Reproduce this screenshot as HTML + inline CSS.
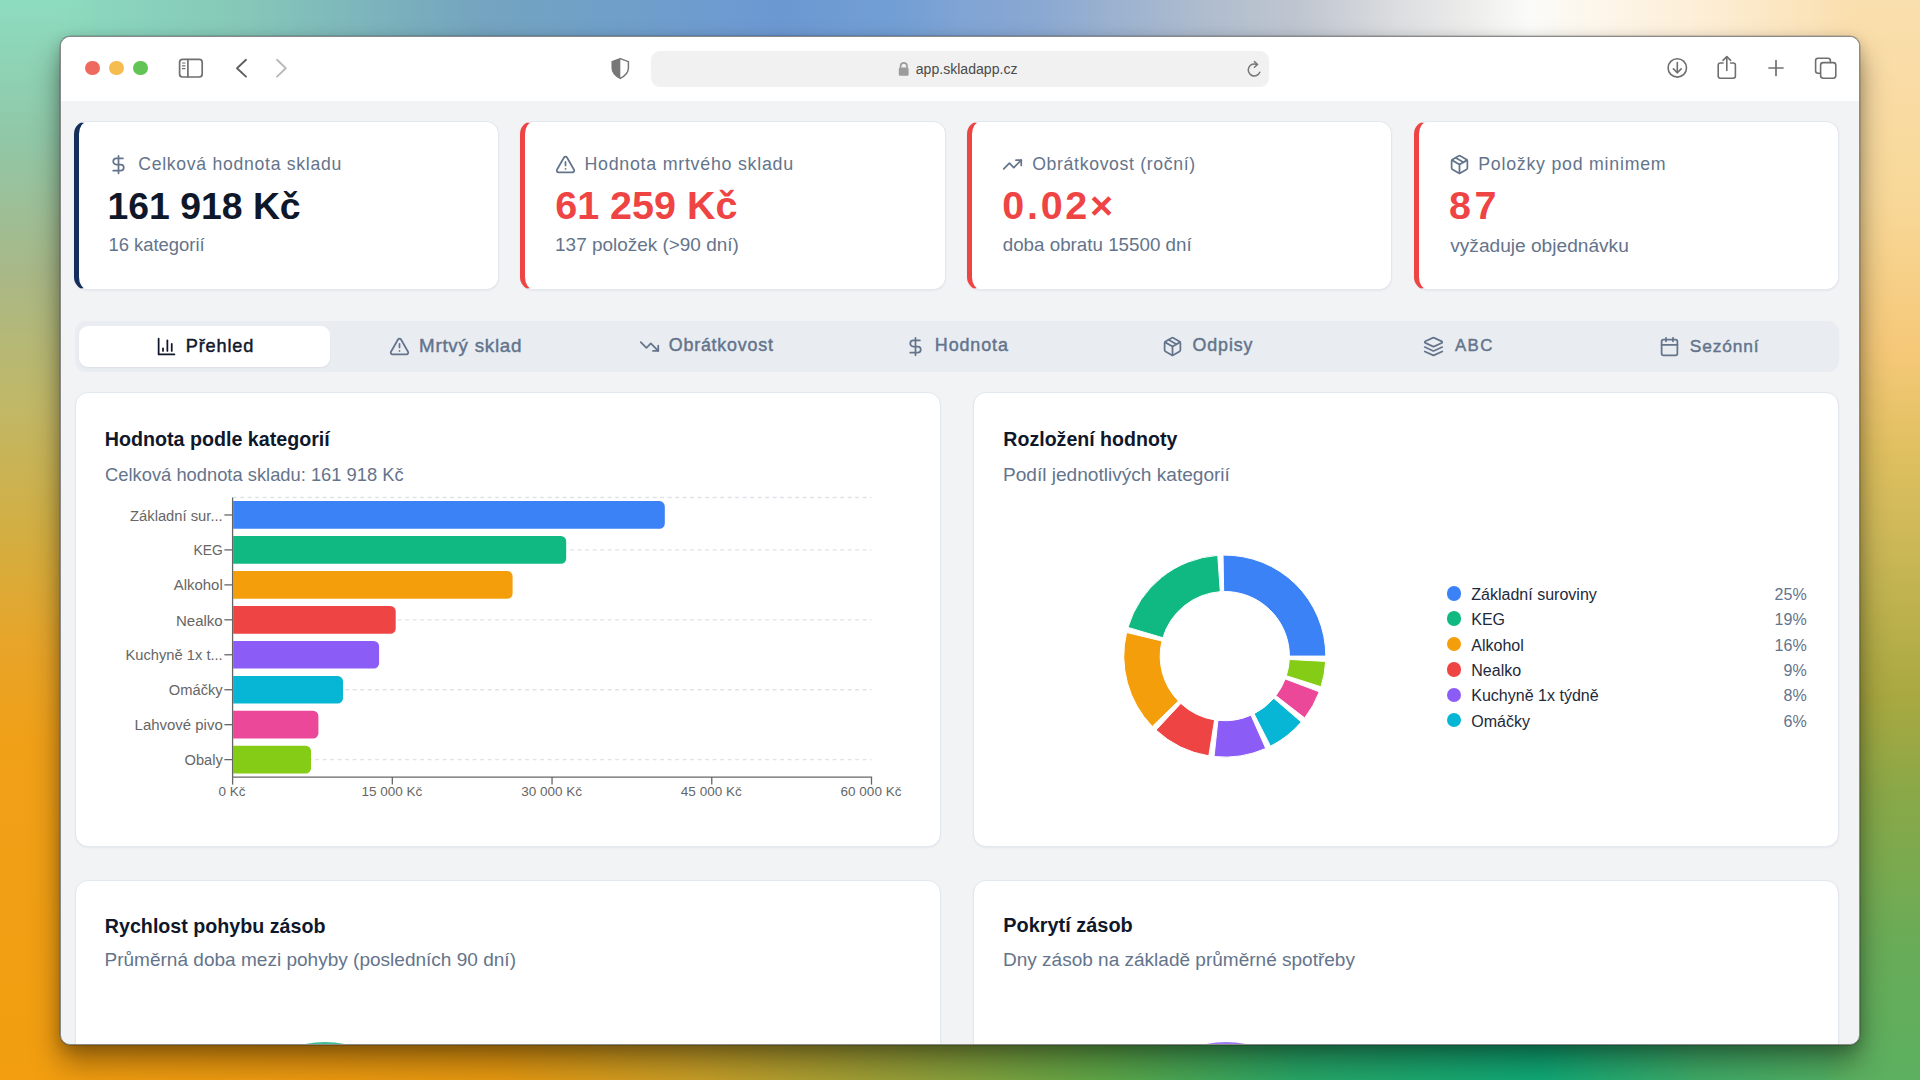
<!DOCTYPE html>
<html><head><meta charset="utf-8">
<style>
html,body{margin:0;padding:0;}
body{width:1920px;height:1080px;overflow:hidden;position:relative;font-family:"Liberation Sans",sans-serif;background:#f2a010;}
.abs{position:absolute;}
.bgs{position:absolute;}
#win{position:absolute;left:60px;top:36px;width:1798px;height:1007px;border:1px solid #8a8a8a;border-radius:10px;overflow:hidden;background:#f2f3f5;
 box-shadow:0 0 0 0.5px rgba(0,0,0,.25), 0 18px 30px rgba(0,0,0,.38), 0 4px 14px rgba(0,0,0,.18);}
#pg{position:absolute;left:-61px;top:-37px;width:1920px;height:1080px;}
.t{position:absolute;white-space:nowrap;line-height:1;}
.card{position:absolute;background:#fff;border:1.3px solid #e3e7ee;border-radius:13px;box-sizing:border-box;box-shadow:0 1px 2px rgba(15,23,42,.05);}
.kpi{border-left:5px solid #ef4444;}
.lbl{color:#64748b;}
svg{position:absolute;overflow:visible;}
</style></head>
<body>
<!-- background strips -->
<div class="bgs" style="left:0;top:0;width:1920px;height:70px;background:linear-gradient(90deg,#8ddfc0 0px,#86c8b8 240px,#74a4bf 480px,#70a0c8 600px,#6e9bd0 720px,#6c98d2 780px,#729fd4 900px,#80a4d4 960px,#8aa8d2 1040px,#98b0d0 1100px,#aebcce 1200px,#c0c6d0 1300px,#dcdee0 1400px,#e8e8e8 1450px,#fbfbf8 1530px,#fdf6ea 1600px,#fdeed6 1700px,#fbe4bc 1800px,#fadaa6 1920px);"></div>
<div class="bgs" style="left:0;top:1010px;width:1920px;height:70px;background:linear-gradient(90deg,#f5a010 0px,#f09c10 300px,#e89a10 500px,#c8a028 700px,#98a038 900px,#60a848 1100px,#28a868 1300px,#10ab78 1540px,#40ad68 1700px,#5eb35f 1920px);"></div>
<div class="bgs" style="left:0;top:0;width:100px;height:1080px;-webkit-mask-image:linear-gradient(90deg,#000 62px,transparent 100px);background:linear-gradient(180deg,#8ddcc0 0px,#90c8a8 135px,#a8b888 270px,#c0b868 400px,#d4ae40 540px,#e8a428 650px,#f0a018 740px,#f29e10 1080px);"></div>
<div class="bgs" style="left:1820px;top:0;width:100px;height:1080px;-webkit-mask-image:linear-gradient(270deg,#000 62px,transparent 100px);background:linear-gradient(180deg,#fadfae 0px,#f8d898 200px,#f5c878 350px,#e0c060 450px,#cdb858 540px,#a8a840 700px,#88a848 800px,#68ac58 950px,#5cb060 1080px);"></div>

<div id="win"><div id="pg">
<div class="abs" style="left:0;top:0;width:1920px;height:101px;background:#fff;"></div>
<div class="abs" style="left:85.10px;top:60.60px;width:14.8px;height:14.8px;border-radius:50%;background:#ee6a5f;"></div>
<div class="abs" style="left:109.20px;top:60.60px;width:14.8px;height:14.8px;border-radius:50%;background:#f5bd4f;"></div>
<div class="abs" style="left:133.40px;top:60.60px;width:14.8px;height:14.8px;border-radius:50%;background:#61c454;"></div>
<svg style="left:0;top:0" width="1920" height="101" fill="none" stroke="#6f6f6f" stroke-width="1.7" stroke-linecap="round" stroke-linejoin="round">
<rect x="179.6" y="59.4" width="22.6" height="17.6" rx="3"/>
<line x1="187.9" y1="59.6" x2="187.9" y2="76.8"/>
<line x1="182.4" y1="63" x2="185" y2="63" stroke-width="1.2"/><line x1="182.4" y1="65.8" x2="185" y2="65.8" stroke-width="1.2"/><line x1="182.4" y1="68.6" x2="185" y2="68.6" stroke-width="1.2"/>
<polyline points="246,59.8 237,68.2 246,76.6" stroke="#5f5f5f" stroke-width="1.9"/>
<polyline points="277,59.8 285.8,68.2 277,76.6" stroke="#b9b9b9" stroke-width="1.9"/>
<path d="M620.3 58.6 L628.4 61.6 V68 C628.4 73 625.2 75.8 620.3 78.4 C615.4 75.8 612.2 73 612.2 68 V61.6 Z" stroke="#777" stroke-width="1.5"/>
<path d="M620.3 58.6 L612.2 61.6 V68 C612.2 73 615.4 75.8 620.3 78.4 Z" fill="#777" stroke="none"/>
<circle cx="1677.3" cy="67.9" r="9.2" stroke-width="1.6"/>
<line x1="1677.3" y1="62.6" x2="1677.3" y2="72.6" stroke-width="1.6"/>
<polyline points="1673.4,68.9 1677.3,72.8 1681.2,68.9" stroke-width="1.6"/>
<path d="M1723 63 H1720.4 A2.2 2.2 0 0 0 1718.2 65.2 V76 A2.2 2.2 0 0 0 1720.4 78.2 H1733.2 A2.2 2.2 0 0 0 1735.4 76 V65.2 A2.2 2.2 0 0 0 1733.2 63 H1730.6" stroke-width="1.6"/>
<line x1="1726.8" y1="56.8" x2="1726.8" y2="70.4" stroke-width="1.6"/>
<polyline points="1723,60.4 1726.8,56.6 1730.6,60.4" stroke-width="1.6"/>
<line x1="1776" y1="60.5" x2="1776" y2="75.5" stroke-width="1.7"/><line x1="1769" y1="68" x2="1783" y2="68" stroke-width="1.7"/>
<path d="M1820.4 73.2 H1818 A2.4 2.4 0 0 1 1815.6 70.8 V60.6 A2.4 2.4 0 0 1 1818 58.2 H1828 A2.4 2.4 0 0 1 1830.4 60.6 V62.4" stroke-width="1.6"/>
<rect x="1820.6" y="62.6" width="15.2" height="15.6" rx="2.6" stroke-width="1.6"/>
</svg>
<div class="abs" style="left:651px;top:51px;width:618px;height:35.5px;border-radius:9px;background:#f1f1f1;"></div>
<svg style="left:0;top:0" width="1920" height="101">
<path d="M900.6 67.8 V65.4 A3.3 3.3 0 0 1 907 65.4 V67.8" fill="none" stroke="#9c9c9c" stroke-width="1.7"/>
<rect x="898.8" y="67.6" width="9.8" height="8.2" rx="1.4" fill="#9c9c9c"/>
<path d="M1259.8 72.3 A6 6 0 1 1 1256.8 64.5" fill="none" stroke="#777" stroke-width="1.5" stroke-linecap="round"/>
<polyline points="1254.4,61.6 1257.6,64.5 1254.4,67.3" fill="none" stroke="#777" stroke-width="1.5" stroke-linecap="round" stroke-linejoin="round"/>
</svg>
<div class="t" style="left:915.74px;top:61.93px;font-size:14.08px;color:#4a4a4a;font-weight:400;letter-spacing:0.00px;">app.skladapp.cz</div>
<div class="card" style="left:73.5px;top:120.6px;width:425.2px;height:169.4px;border-left:5px solid #14305a;"></div>
<svg style="left:108.20px;top:154.00px" width="21" height="21" viewBox="0 0 24 24" fill="none" stroke="#64748b" stroke-width="2" stroke-linecap="round" stroke-linejoin="round"><line x1="12" x2="12" y1="2" y2="22"/><path d="M17 5H9.5a3.5 3.5 0 0 0 0 7h5a3.5 3.5 0 0 1 0 7H6"/></svg>
<div class="t" style="left:138.22px;top:155.91px;font-size:17.63px;color:#64748b;font-weight:400;letter-spacing:0.72px;">Celková hodnota skladu</div>
<div class="t" style="left:107.46px;top:187.64px;font-size:37.37px;color:#0f172a;font-weight:700;letter-spacing:0.00px;">161 918 Kč</div>
<div class="t" style="left:108.41px;top:236.14px;font-size:18.42px;color:#64748b;font-weight:400;letter-spacing:0.00px;">16 kategorií</div>
<div class="card" style="left:520.2px;top:120.6px;width:426.0px;height:169.4px;border-left:5px solid #ef4444;"></div>
<svg style="left:554.90px;top:154.00px" width="21" height="21" viewBox="0 0 24 24" fill="none" stroke="#64748b" stroke-width="2" stroke-linecap="round" stroke-linejoin="round"><path d="m21.73 18-8-14a2 2 0 0 0-3.48 0l-8 14A2 2 0 0 0 4 21h16a2 2 0 0 0 1.73-3"/><path d="M12 9v4"/><path d="M12 17h.01"/></svg>
<div class="t" style="left:584.38px;top:155.73px;font-size:17.84px;color:#64748b;font-weight:400;letter-spacing:0.74px;">Hodnota mrtvého skladu</div>
<div class="t" style="left:555.22px;top:185.83px;font-size:39.49px;color:#ef4444;font-weight:700;letter-spacing:0.00px;">61 259 Kč</div>
<div class="t" style="left:555.07px;top:235.69px;font-size:18.95px;color:#64748b;font-weight:400;letter-spacing:0.00px;">137 položek (&gt;90 dní)</div>
<div class="card" style="left:967.3px;top:120.6px;width:424.8px;height:169.4px;border-left:5px solid #ef4444;"></div>
<svg style="left:1002.00px;top:154.00px" width="21" height="21" viewBox="0 0 24 24" fill="none" stroke="#64748b" stroke-width="2" stroke-linecap="round" stroke-linejoin="round"><polyline points="22 7 13.5 15.5 8.5 10.5 2 17"/><polyline points="16 7 22 7 22 13"/></svg>
<div class="t" style="left:1032.20px;top:155.90px;font-size:17.65px;color:#64748b;font-weight:400;letter-spacing:0.67px;">Obrátkovost (roční)</div>
<div class="t" style="left:1002.30px;top:185.83px;font-size:39.50px;color:#ef4444;font-weight:700;letter-spacing:2.70px;">0.02×</div>
<div class="t" style="left:1002.75px;top:235.84px;font-size:18.78px;color:#64748b;font-weight:400;letter-spacing:0.00px;">doba obratu 15500 dní</div>
<div class="card" style="left:1414.0px;top:120.6px;width:425.0px;height:169.4px;border-left:5px solid #ef4444;"></div>
<svg style="left:1448.70px;top:154.00px" width="21" height="21" viewBox="0 0 24 24" fill="none" stroke="#64748b" stroke-width="2" stroke-linecap="round" stroke-linejoin="round"><path d="m7.5 4.27 9 5.15"/><path d="M21 8a2 2 0 0 0-1-1.73l-7-4a2 2 0 0 0-2 0l-7 4A2 2 0 0 0 3 8v8a2 2 0 0 0 1 1.73l7 4a2 2 0 0 0 2 0l7-4A2 2 0 0 0 21 16Z"/><path d="m3.3 7 8.7 5 8.7-5"/><path d="M12 22V12"/></svg>
<div class="t" style="left:1478.18px;top:155.81px;font-size:17.75px;color:#64748b;font-weight:400;letter-spacing:0.77px;">Položky pod minimem</div>
<div class="t" style="left:1449.00px;top:185.83px;font-size:39.50px;color:#ef4444;font-weight:700;letter-spacing:3.60px;">87</div>
<div class="t" style="left:1450.20px;top:235.53px;font-size:19.14px;color:#64748b;font-weight:400;letter-spacing:0.00px;">vyžaduje objednávku</div>
<div class="abs" style="left:74.7px;top:321.2px;width:1764.6px;height:50.4px;border-radius:11px;background:#e9edf2;"></div>
<div class="abs" style="left:79px;top:326.2px;width:250.8px;height:41px;border-radius:9px;background:#fff;box-shadow:0 1px 2px rgba(15,23,42,.06);"></div>
<svg style="left:155.50px;top:336.20px" width="21" height="21" viewBox="0 0 24 24" fill="none" stroke="#0f172a" stroke-width="2" stroke-linecap="round" stroke-linejoin="round"><path d="M3 3v18h18"/><path d="M18 17V9"/><path d="M13 17V5"/><path d="M8 17v-3"/></svg>
<div class="t" style="left:185.80px;top:337.07px;font-size:18.16px;color:#0f172a;font-weight:400;letter-spacing:0.81px;-webkit-text-stroke:0.45px #0f172a;">Přehled</div>
<svg style="left:389.25px;top:336.20px" width="21" height="21" viewBox="0 0 24 24" fill="none" stroke="#64748b" stroke-width="2" stroke-linecap="round" stroke-linejoin="round"><path d="m21.73 18-8-14a2 2 0 0 0-3.48 0l-8 14A2 2 0 0 0 4 21h16a2 2 0 0 0 1.73-3"/><path d="M12 9v4"/><path d="M12 17h.01"/></svg>
<div class="t" style="left:418.99px;top:336.52px;font-size:18.81px;color:#64748b;font-weight:400;letter-spacing:0.75px;-webkit-text-stroke:0.45px #64748b;">Mrtvý sklad</div>
<svg style="left:638.80px;top:336.20px" width="21" height="21" viewBox="0 0 24 24" fill="none" stroke="#64748b" stroke-width="2" stroke-linecap="round" stroke-linejoin="round"><polyline points="22 17 13.5 8.5 8.5 13.5 2 7"/><polyline points="16 17 22 17 22 11"/></svg>
<div class="t" style="left:668.79px;top:337.30px;font-size:17.88px;color:#64748b;font-weight:400;letter-spacing:0.78px;-webkit-text-stroke:0.45px #64748b;">Obrátkovost</div>
<svg style="left:904.90px;top:336.20px" width="21" height="21" viewBox="0 0 24 24" fill="none" stroke="#64748b" stroke-width="2" stroke-linecap="round" stroke-linejoin="round"><line x1="12" x2="12" y1="2" y2="22"/><path d="M17 5H9.5a3.5 3.5 0 0 0 0 7h5a3.5 3.5 0 0 1 0 7H6"/></svg>
<div class="t" style="left:934.82px;top:337.27px;font-size:17.92px;color:#64748b;font-weight:400;letter-spacing:0.90px;-webkit-text-stroke:0.45px #64748b;">Hodnota</div>
<svg style="left:1161.75px;top:336.20px" width="21" height="21" viewBox="0 0 24 24" fill="none" stroke="#64748b" stroke-width="2" stroke-linecap="round" stroke-linejoin="round"><path d="m7.5 4.27 9 5.15"/><path d="M21 8a2 2 0 0 0-1-1.73l-7-4a2 2 0 0 0-2 0l-7 4A2 2 0 0 0 3 8v8a2 2 0 0 0 1 1.73l7 4a2 2 0 0 0 2 0l7-4A2 2 0 0 0 21 16Z"/><path d="m3.3 7 8.7 5 8.7-5"/><path d="M12 22V12"/></svg>
<div class="t" style="left:1192.54px;top:337.33px;font-size:17.84px;color:#64748b;font-weight:400;letter-spacing:0.89px;-webkit-text-stroke:0.45px #64748b;">Odpisy</div>
<svg style="left:1423.45px;top:336.20px" width="21" height="21" viewBox="0 0 24 24" fill="none" stroke="#64748b" stroke-width="2" stroke-linecap="round" stroke-linejoin="round"><path d="m12.83 2.18a2 2 0 0 0-1.66 0L2.6 6.08a1 1 0 0 0 0 1.83l8.58 3.91a2 2 0 0 0 1.66 0l8.58-3.9a1 1 0 0 0 0-1.83Z"/><path d="m22 17.65-9.17 4.16a2 2 0 0 1-1.66 0L2 17.65"/><path d="m22 12.65-9.17 4.16a2 2 0 0 1-1.66 0L2 12.65"/></svg>
<div class="t" style="left:1455.00px;top:338.25px;font-size:16.77px;color:#64748b;font-weight:400;letter-spacing:1.38px;-webkit-text-stroke:0.45px #64748b;">ABC</div>
<svg style="left:1659.10px;top:336.20px" width="21" height="21" viewBox="0 0 24 24" fill="none" stroke="#64748b" stroke-width="2" stroke-linecap="round" stroke-linejoin="round"><path d="M8 2v4"/><path d="M16 2v4"/><rect width="18" height="18" x="3" y="4" rx="2"/><path d="M3 10h18"/></svg>
<div class="t" style="left:1689.81px;top:337.73px;font-size:17.37px;color:#64748b;font-weight:400;letter-spacing:0.85px;-webkit-text-stroke:0.45px #64748b;">Sezónní</div>
<div class="card" style="left:74.7px;top:392.2px;width:866.5px;height:455.3px;"></div>
<div class="card" style="left:972.5px;top:392.2px;width:866.8px;height:455.3px;"></div>
<div class="card" style="left:74.7px;top:879.6px;width:866.5px;height:400px;"></div>
<div class="card" style="left:972.5px;top:879.6px;width:866.8px;height:400px;"></div>
<div class="t" style="left:104.82px;top:429.89px;font-size:19.66px;color:#0f172a;font-weight:700;letter-spacing:0.00px;">Hodnota podle kategorií</div>
<div class="t" style="left:105.08px;top:465.61px;font-size:18.34px;color:#64748b;font-weight:400;letter-spacing:0.00px;">Celková hodnota skladu: 161 918 Kč</div>
<div class="t" style="left:1003.32px;top:429.95px;font-size:19.59px;color:#0f172a;font-weight:700;letter-spacing:0.00px;">Rozložení hodnoty</div>
<div class="t" style="left:1002.97px;top:464.98px;font-size:19.08px;color:#64748b;font-weight:400;letter-spacing:0.00px;">Podíl jednotlivých kategorií</div>
<div class="t" style="left:104.82px;top:916.58px;font-size:19.67px;color:#0f172a;font-weight:700;letter-spacing:0.00px;">Rychlost pohybu zásob</div>
<div class="t" style="left:104.48px;top:950.11px;font-size:19.05px;color:#64748b;font-weight:400;letter-spacing:0.00px;">Průměrná doba mezi pohyby (posledních 90 dní)</div>
<div class="t" style="left:1003.30px;top:916.37px;font-size:19.92px;color:#0f172a;font-weight:700;letter-spacing:0.00px;">Pokrytí zásob</div>
<div class="t" style="left:1002.98px;top:950.13px;font-size:19.02px;color:#64748b;font-weight:400;letter-spacing:0.00px;">Dny zásob na základě průměrné spotřeby</div>
<svg style="left:0;top:0" width="1920" height="1080">
<line x1="232.6" y1="497.50" x2="871.5" y2="497.50" stroke="#dfe3e8" stroke-width="1.3" stroke-dasharray="4 3.5"/>
<line x1="232.6" y1="549.92" x2="871.5" y2="549.92" stroke="#dfe3e8" stroke-width="1.3" stroke-dasharray="4 3.5"/>
<line x1="232.6" y1="619.83" x2="871.5" y2="619.83" stroke="#dfe3e8" stroke-width="1.3" stroke-dasharray="4 3.5"/>
<line x1="232.6" y1="689.73" x2="871.5" y2="689.73" stroke="#dfe3e8" stroke-width="1.3" stroke-dasharray="4 3.5"/>
<line x1="232.6" y1="759.62" x2="871.5" y2="759.62" stroke="#dfe3e8" stroke-width="1.3" stroke-dasharray="4 3.5"/>
<path d="M233.20 501.12 H659.50 A5.3 5.3 0 0 1 664.80 506.43 V523.53 A5.3 5.3 0 0 1 659.50 528.83 H233.20 Z" fill="#3b82f6"/>
<line x1="224.4" y1="514.98" x2="232.6" y2="514.98" stroke="#666" stroke-width="1.3"/>
<path d="M233.20 536.07 H560.90 A5.3 5.3 0 0 1 566.20 541.37 V558.48 A5.3 5.3 0 0 1 560.90 563.77 H233.20 Z" fill="#10b981"/>
<line x1="224.4" y1="549.92" x2="232.6" y2="549.92" stroke="#666" stroke-width="1.3"/>
<path d="M233.20 571.02 H507.30 A5.3 5.3 0 0 1 512.60 576.32 V593.43 A5.3 5.3 0 0 1 507.30 598.73 H233.20 Z" fill="#f59e0b"/>
<line x1="224.4" y1="584.88" x2="232.6" y2="584.88" stroke="#666" stroke-width="1.3"/>
<path d="M233.20 605.98 H390.40 A5.3 5.3 0 0 1 395.70 611.27 V628.38 A5.3 5.3 0 0 1 390.40 633.68 H233.20 Z" fill="#ef4444"/>
<line x1="224.4" y1="619.83" x2="232.6" y2="619.83" stroke="#666" stroke-width="1.3"/>
<path d="M233.20 640.92 H373.80 A5.3 5.3 0 0 1 379.10 646.22 V663.33 A5.3 5.3 0 0 1 373.80 668.62 H233.20 Z" fill="#8b5cf6"/>
<line x1="224.4" y1="654.77" x2="232.6" y2="654.77" stroke="#666" stroke-width="1.3"/>
<path d="M233.20 675.88 H337.70 A5.3 5.3 0 0 1 343.00 681.17 V698.28 A5.3 5.3 0 0 1 337.70 703.58 H233.20 Z" fill="#06b6d4"/>
<line x1="224.4" y1="689.73" x2="232.6" y2="689.73" stroke="#666" stroke-width="1.3"/>
<path d="M233.20 710.82 H313.10 A5.3 5.3 0 0 1 318.40 716.12 V733.23 A5.3 5.3 0 0 1 313.10 738.52 H233.20 Z" fill="#ec4899"/>
<line x1="224.4" y1="724.67" x2="232.6" y2="724.67" stroke="#666" stroke-width="1.3"/>
<path d="M233.20 745.77 H305.70 A5.3 5.3 0 0 1 311.00 751.07 V768.18 A5.3 5.3 0 0 1 305.70 773.48 H233.20 Z" fill="#84cc16"/>
<line x1="224.4" y1="759.62" x2="232.6" y2="759.62" stroke="#666" stroke-width="1.3"/>
<line x1="232.6" y1="497.5" x2="232.6" y2="777.1" stroke="#666" stroke-width="1.3"/>
<line x1="232.6" y1="777.1" x2="872.1" y2="777.1" stroke="#666" stroke-width="1.3"/>
<line x1="232.60" y1="777.1" x2="232.60" y2="784.6" stroke="#666" stroke-width="1.3"/>
<line x1="392.32" y1="777.1" x2="392.32" y2="784.6" stroke="#666" stroke-width="1.3"/>
<line x1="552.05" y1="777.1" x2="552.05" y2="784.6" stroke="#666" stroke-width="1.3"/>
<line x1="711.77" y1="777.1" x2="711.77" y2="784.6" stroke="#666" stroke-width="1.3"/>
<line x1="871.50" y1="777.1" x2="871.50" y2="784.6" stroke="#666" stroke-width="1.3"/>
</svg>
<div class="t" style="right:1697.30px;top:508.54px;font-size:14.75px;color:#666;font-weight:400;letter-spacing:0.00px;text-align:right;">Základní sur...</div>
<div class="t" style="right:1697.30px;top:544.25px;font-size:13.85px;color:#666;font-weight:400;letter-spacing:0.00px;text-align:right;">KEG</div>
<div class="t" style="right:1697.30px;top:578.29px;font-size:14.92px;color:#666;font-weight:400;letter-spacing:0.00px;text-align:right;">Alkohol</div>
<div class="t" style="right:1697.30px;top:613.16px;font-size:15.02px;color:#666;font-weight:400;letter-spacing:0.00px;text-align:right;">Nealko</div>
<div class="t" style="right:1697.30px;top:648.39px;font-size:14.69px;color:#666;font-weight:400;letter-spacing:0.00px;text-align:right;">Kuchyně 1x t...</div>
<div class="t" style="right:1697.30px;top:683.33px;font-size:14.70px;color:#666;font-weight:400;letter-spacing:0.00px;text-align:right;">Omáčky</div>
<div class="t" style="right:1697.30px;top:718.06px;font-size:14.96px;color:#666;font-weight:400;letter-spacing:0.00px;text-align:right;">Lahvové pivo</div>
<div class="t" style="right:1697.30px;top:753.30px;font-size:14.62px;color:#666;font-weight:400;letter-spacing:0.00px;text-align:right;">Obaly</div>
<div class="t" style="left:32.10px;width:400px;text-align:center;top:785.02px;font-size:13.50px;color:#666;font-weight:400;">0 Kč</div>
<div class="t" style="left:191.82px;width:400px;text-align:center;top:785.02px;font-size:13.50px;color:#666;font-weight:400;">15 000 Kč</div>
<div class="t" style="left:351.55px;width:400px;text-align:center;top:785.02px;font-size:13.50px;color:#666;font-weight:400;">30 000 Kč</div>
<div class="t" style="left:511.27px;width:400px;text-align:center;top:785.02px;font-size:13.50px;color:#666;font-weight:400;">45 000 Kč</div>
<div class="t" style="left:671.00px;width:400px;text-align:center;top:785.02px;font-size:13.50px;color:#666;font-weight:400;">60 000 Kč</div>
<svg style="left:0;top:0" width="1920" height="1080">
<path d="M1325.80 656.10 A101.0 101.0 0 0 0 1223.04 555.12 L1223.67 591.51 A64.6 64.6 0 0 1 1289.40 656.10 Z" fill="#3b82f6" stroke="#fff" stroke-width="1"/>
<path d="M1217.75 555.35 A101.0 101.0 0 0 0 1127.96 627.41 L1162.86 637.75 A64.6 64.6 0 0 1 1220.29 591.66 Z" fill="#10b981" stroke="#fff" stroke-width="1"/>
<path d="M1126.59 632.52 A101.0 101.0 0 0 0 1152.27 726.39 L1178.41 701.06 A64.6 64.6 0 0 1 1161.98 641.02 Z" fill="#f59e0b" stroke="#fff" stroke-width="1"/>
<path d="M1156.05 730.09 A101.0 101.0 0 0 0 1208.83 755.83 L1214.58 719.89 A64.6 64.6 0 0 1 1180.83 703.42 Z" fill="#ef4444" stroke="#fff" stroke-width="1"/>
<path d="M1214.07 756.53 A101.0 101.0 0 0 0 1265.72 748.44 L1250.97 715.16 A64.6 64.6 0 0 1 1217.94 720.33 Z" fill="#8b5cf6" stroke="#fff" stroke-width="1"/>
<path d="M1270.50 746.17 A101.0 101.0 0 0 0 1301.31 722.03 L1273.74 698.27 A64.6 64.6 0 0 1 1254.03 713.71 Z" fill="#06b6d4" stroke="#fff" stroke-width="1"/>
<path d="M1304.66 717.93 A101.0 101.0 0 0 0 1319.28 691.80 L1285.23 678.93 A64.6 64.6 0 0 1 1275.88 695.65 Z" fill="#ec4899" stroke="#fff" stroke-width="1"/>
<path d="M1321.02 686.81 A101.0 101.0 0 0 0 1325.66 661.39 L1289.31 659.48 A64.6 64.6 0 0 1 1286.34 675.74 Z" fill="#84cc16" stroke="#fff" stroke-width="1"/>
</svg>
<div class="abs" style="left:1446.70px;top:586.00px;width:14.6px;height:14.6px;border-radius:50%;background:#3b82f6;"></div>
<div class="t" style="left:1471.22px;top:585.76px;font-size:16.05px;color:#1e293b;font-weight:400;letter-spacing:0.00px;">Základní suroviny</div>
<div class="t" style="right:113.30px;top:585.76px;font-size:16.05px;color:#64748b;font-weight:400;letter-spacing:0.00px;text-align:right;">25%</div>
<div class="abs" style="left:1446.70px;top:611.38px;width:14.6px;height:14.6px;border-radius:50%;background:#10b981;"></div>
<div class="t" style="left:1471.22px;top:611.14px;font-size:16.05px;color:#1e293b;font-weight:400;letter-spacing:0.00px;">KEG</div>
<div class="t" style="right:113.30px;top:611.14px;font-size:16.05px;color:#64748b;font-weight:400;letter-spacing:0.00px;text-align:right;">19%</div>
<div class="abs" style="left:1446.70px;top:636.76px;width:14.6px;height:14.6px;border-radius:50%;background:#f59e0b;"></div>
<div class="t" style="left:1471.22px;top:636.52px;font-size:16.05px;color:#1e293b;font-weight:400;letter-spacing:0.00px;">Alkohol</div>
<div class="t" style="right:113.30px;top:636.52px;font-size:16.05px;color:#64748b;font-weight:400;letter-spacing:0.00px;text-align:right;">16%</div>
<div class="abs" style="left:1446.70px;top:662.14px;width:14.6px;height:14.6px;border-radius:50%;background:#ef4444;"></div>
<div class="t" style="left:1471.22px;top:661.90px;font-size:16.05px;color:#1e293b;font-weight:400;letter-spacing:0.00px;">Nealko</div>
<div class="t" style="right:113.30px;top:661.90px;font-size:16.05px;color:#64748b;font-weight:400;letter-spacing:0.00px;text-align:right;">9%</div>
<div class="abs" style="left:1446.70px;top:687.52px;width:14.6px;height:14.6px;border-radius:50%;background:#8b5cf6;"></div>
<div class="t" style="left:1471.22px;top:687.28px;font-size:16.05px;color:#1e293b;font-weight:400;letter-spacing:0.00px;">Kuchyně 1x týdně</div>
<div class="t" style="right:113.30px;top:687.28px;font-size:16.05px;color:#64748b;font-weight:400;letter-spacing:0.00px;text-align:right;">8%</div>
<div class="abs" style="left:1446.70px;top:712.90px;width:14.6px;height:14.6px;border-radius:50%;background:#06b6d4;"></div>
<div class="t" style="left:1471.22px;top:712.66px;font-size:16.05px;color:#1e293b;font-weight:400;letter-spacing:0.00px;">Omáčky</div>
<div class="t" style="right:113.30px;top:712.66px;font-size:16.05px;color:#64748b;font-weight:400;letter-spacing:0.00px;text-align:right;">6%</div>
<div class="abs" style="left:224px;top:1042.2px;width:202px;height:202px;border-radius:50%;background:#3fbf93;"></div>
<div class="abs" style="left:1125px;top:1042.4px;width:202px;height:202px;border-radius:50%;background:#9f7af5;"></div>

</div></div>
</body></html>
